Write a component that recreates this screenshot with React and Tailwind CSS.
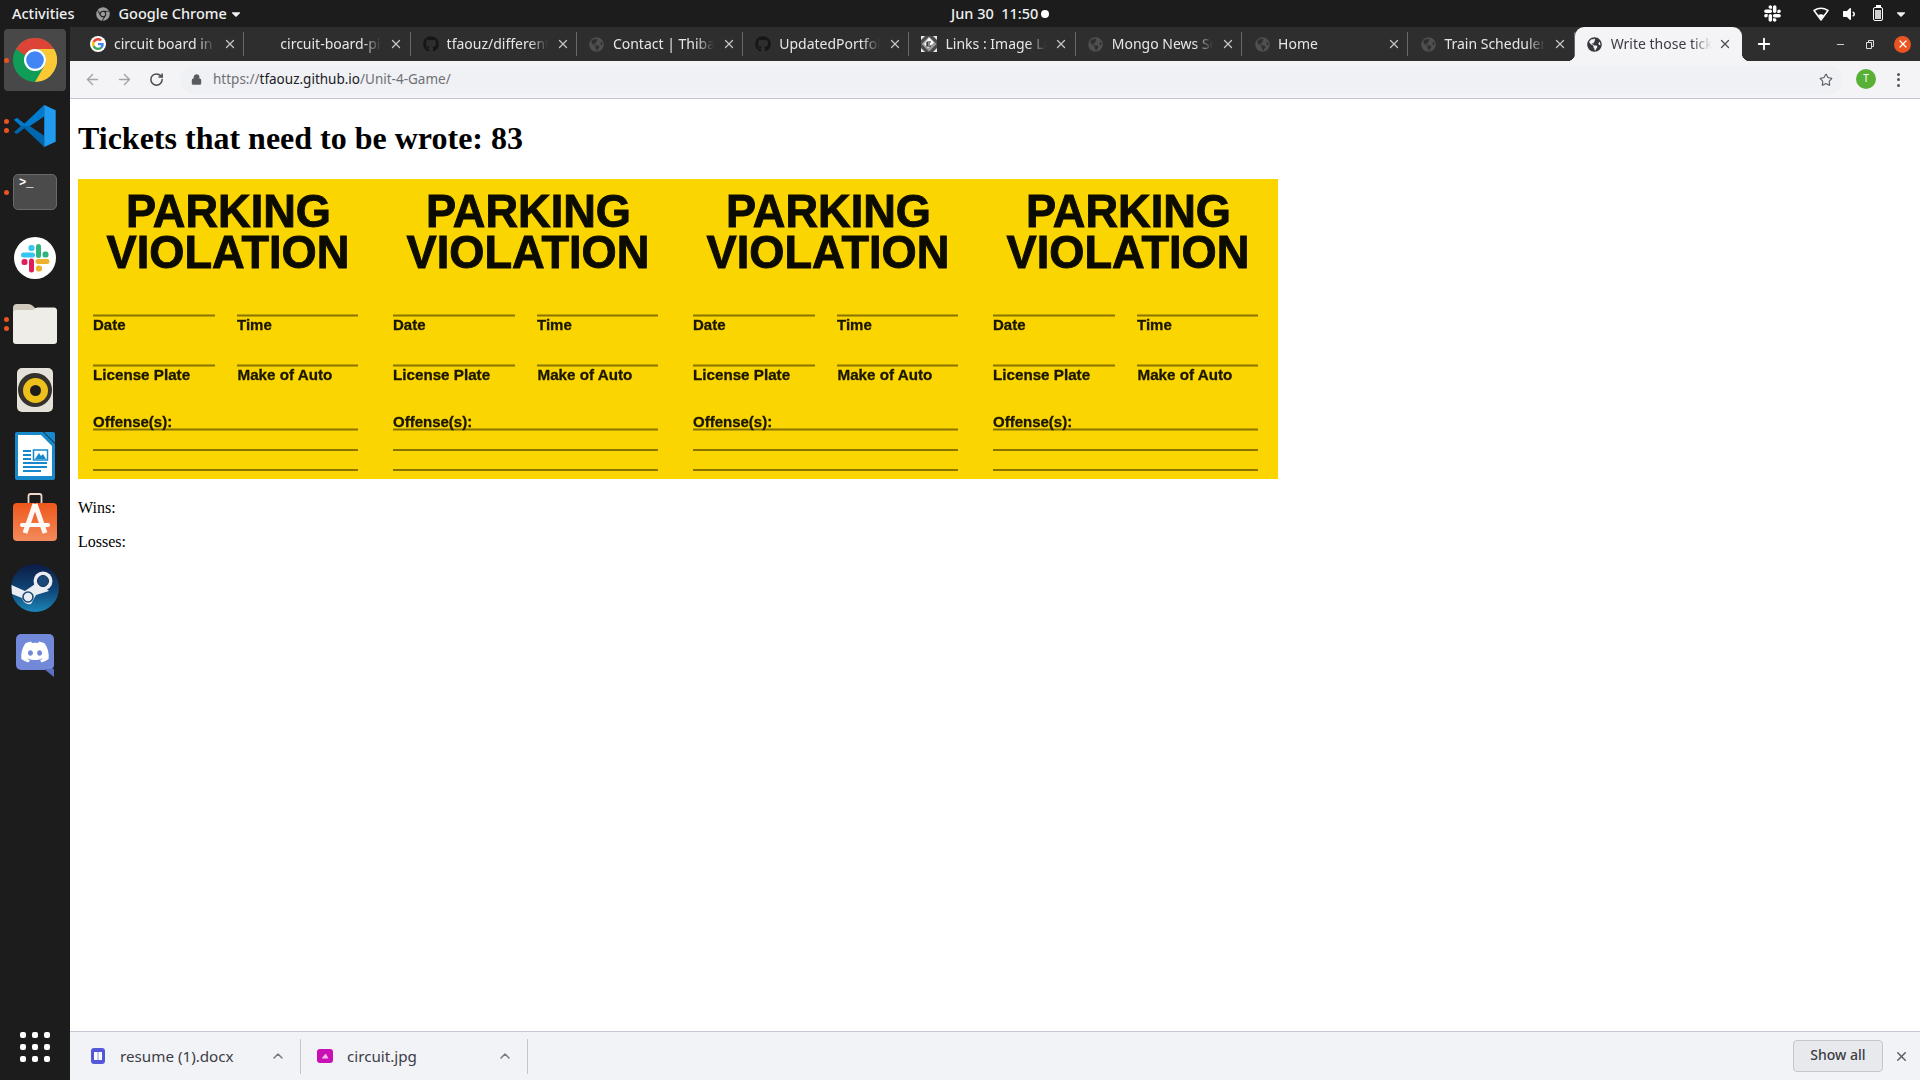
import React from "react";
import { ArrowLeft, ArrowRight, RotateCw, Lock, Star, Plus, Minus, X, ChevronUp } from "lucide-react";
import { FaGithub, FaGlobeAmericas, FaChrome, FaSlack, FaVolumeDown, FaDiscord, FaCaretDown } from "react-icons/fa";

const UI = "font-['Noto_Sans',sans-serif]";

function ChromeLogo({ size = 44 }) {
  return (
    <svg width={size} height={size} viewBox="0 0 48 48">
      <circle cx="24" cy="24" r="24" fill="#109d58" />
      <path d="M3.2 12 A24 24 0 0 1 44.8 12 H24 A12 12 0 0 0 13.2 19 Z" fill="#db4437" />
      <path d="M44.8 12 A24 24 0 0 1 24 48 L34.4 30 A12 12 0 0 0 24 12 Z" fill="#fcc934" />
      <circle cx="24" cy="24" r="12" fill="#ffffff" />
      <circle cx="24" cy="24" r="9.6" fill="#4285f4" />
    </svg>
  );
}

function GoogleG() {
  return (
    <span className="flex h-4 w-4 items-center justify-center rounded-full bg-white">
      <svg width="12" height="12" viewBox="0 0 48 48">
        <path fill="#ea4335" d="M24 9.5c3.5 0 6.7 1.3 9.2 3.5l6.9-6.9C35.900 2.300 30.400 0 24 0 14.600 0 6.500 5.400 2.600 13.200l8 6.200C12.500 13.600 17.800 9.500 24 9.500z" />
        <path fill="#4285f4" d="M47 24.500c0-1.600-.1-3.100-.4-4.500H24v9h13c-.6 3-2.300 5.500-4.800 7.200l7.700 6C44.400 38.600 47 32 47 24.500z" />
        <path fill="#fbbc05" d="M10.600 28.600A14.500 14.500 0 0 1 10.600 19.400l-8-6.200a24 24 0 0 0 0 21.600z" />
        <path fill="#34a853" d="M24 48c6.500 0 11.900-2.100 15.900-5.800l-7.700-6c-2.200 1.500-5 2.300-8.200 2.300-6.200 0-11.500-4.100-13.400-9.900l-8 6.200C6.500 42.600 14.600 48 24 48z" />
      </svg>
    </span>
  );
}

function LinksIcon() {
  return (
    <svg width="16" height="16" viewBox="0 0 16 16">
      <rect x="0" y="0" width="16" height="16" fill="#4a4a4a" />
      <path d="M0 0 L4 0 L0 4 Z M16 0 L12 0 L16 4 Z M0 16 L4 16 L0 12 Z M16 16 L12 16 L16 12 Z" fill="#e8e8e8" />
      <path d="M8 0.500 L15.500 8 L8 15.500 L0.500 8 Z" fill="#9c9c9c" />
      <path d="M8 1.500 L13 6.500 L7 12 L3 8 Z" fill="#ffffff" />
      <path d="M6 6 L10 6 M6 8 L9 8 M6 6 L6 10 L10 10" stroke="#111" strokeWidth="1.200" fill="none" />
    </svg>
  );
}

const tabs = [
  { title: "circuit board in", icon: <GoogleG /> },
  { title: "circuit-board-pi", icon: null },
  { title: "tfaouz/different", icon: <FaGithub size={16} className="text-[#161616]" /> },
  { title: "Contact | Thibaut", icon: <FaGlobeAmericas size={15} className="text-[#4f4f50]" /> },
  { title: "UpdatedPortfolio", icon: <FaGithub size={16} className="text-[#161616]" /> },
  { title: "Links : Image Links", icon: <LinksIcon /> },
  { title: "Mongo News Scraper", icon: <FaGlobeAmericas size={15} className="text-[#4f4f50]" /> },
  { title: "Home", icon: <FaGlobeAmericas size={15} className="text-[#4f4f50]" /> },
  { title: "Train Scheduler", icon: <FaGlobeAmericas size={15} className="text-[#4f4f50]" /> },
];

function Tab({ title, icon }) {
  return (
    <div className="flex h-[24px] w-[166.300px] shrink-0 items-center border-r border-[#6a696a] pl-3">
      <span className="flex w-4 shrink-0 justify-center">{icon}</span>
      <span className="ml-2 w-[101px] overflow-hidden whitespace-nowrap pb-[2px] text-[14px] text-[#e6e6e8] [mask-image:linear-gradient(to_right,black_82%,transparent)]">
        {title}
      </span>
      <X size={14} strokeWidth={2.2} className="ml-[8px] text-[#c4c4c6]" />
    </div>
  );
}

function Dock({ dots = 0, active = false, children }) {
  return (
    <div className="relative flex h-[66px] w-[70px] shrink-0 items-center justify-center">
      {active && <div className="absolute left-1 top-[2px] h-[62px] w-[62px] rounded-[4px] bg-[#484848]" />}
      <div className="relative flex items-center justify-center">{children}</div>
      {dots > 0 && (
        <div className="absolute left-[4px] top-0 flex h-full flex-col justify-center gap-[4px]">
          {Array.from({ length: dots }).map((_, i) => (
            <span key={i} className="h-[5px] w-[5px] rounded-full bg-[#e95420]" />
          ))}
        </div>
      )}
    </div>
  );
}

function Sidebar() {
  return (
    <aside className="flex w-[70px] shrink-0 flex-col bg-[#1c1c1c]">
      <Dock dots={1} active><ChromeLogo size={44} /></Dock>
      <Dock dots={2}>
        <svg width="44" height="44" viewBox="0 0 100 100">
          <path d="M71 2 L26 45 L9 32 L2 36 L18 50 L2 64 L9 68 L26 55 L71 98 L71 72 L38 50 L71 28 Z" fill="#0066ad" />
          <path d="M71 2 L26 45 L9 32 L2 36 L18 50 L38 50 L71 28 Z" fill="#007acc" />
          <path d="M71 2 L97 14 V86 L71 98 Z" fill="#1f9cf0" />
        </svg>
      </Dock>
      <Dock dots={1}>
        <div className="h-[36px] w-[44px] rounded-[5px] border border-[#6a6a6a] bg-[#4b4b4b] pl-[5px] font-['Liberation_Mono',monospace] text-[12px] font-bold leading-[17px] text-white">
          &gt;_
        </div>
      </Dock>
      <Dock>
        <svg width="42" height="42" viewBox="0 0 42 42">
          <circle cx="21" cy="21" r="21" fill="#ffffff" />
          <rect x="7" y="15.500" width="14" height="5" rx="2.500" fill="#36c5f0" />
          <rect x="14.500" y="8" width="6" height="6" rx="2.500" fill="#36c5f0" />
          <rect x="22" y="7" width="5" height="14" rx="2.500" fill="#2eb67d" />
          <rect x="28.500" y="14.500" width="6" height="6" rx="2.500" fill="#2eb67d" />
          <rect x="21.500" y="22" width="14" height="5" rx="2.500" fill="#ecb22e" />
          <rect x="22" y="28.500" width="6" height="6" rx="2.500" fill="#ecb22e" />
          <rect x="15" y="21.500" width="5" height="14" rx="2.500" fill="#e01e5a" />
          <rect x="7.500" y="22" width="6" height="6" rx="2.500" fill="#e01e5a" />
        </svg>
      </Dock>
      <Dock dots={2}>
        <svg width="46" height="42" viewBox="0 0 46 42">
          <path d="M1 5 Q1 1 5 1 H16 Q19 1 21 3 L23 5 H41 Q45 5 45 9 V14 H1 Z" fill="#cfcabc" />
          <path d="M1 10 Q1 7 4 7 H21 L25 4.500 H42 Q45 4.500 45 8 V38 Q45 41 42 41 H4 Q1 41 1 38 Z" fill="#efede8" />
        </svg>
      </Dock>
      <Dock>
        <div className="flex h-[44px] w-[36px] items-center justify-center rounded-[5px] bg-[#e4e1d8]">
          <div className="flex h-[34px] w-[34px] items-center justify-center rounded-full bg-[#35322e]">
            <div className="flex h-[25px] w-[25px] items-center justify-center rounded-full bg-[#eec01c]">
              <div className="h-[11px] w-[11px] rounded-full bg-[#1f1d1a]" />
            </div>
          </div>
        </div>
      </Dock>
      <Dock>
        <svg width="40" height="48" viewBox="0 0 40 48">
          <path d="M0 2 Q0 0 2 0 H28 L40 12 V46 Q40 48 38 48 H2 Q0 48 0 46 Z" fill="#1689cc" />
          <path d="M3 3 H26 L37 14 V44 H3 Z" fill="#ffffff" />
          <path d="M29 0 H38 Q40 0 40 2 V11 Z" fill="#1689cc" />
          <path d="M8 19 H16 M8 23 H16 M8 27 H16 M8 31 H32 M8 35 H32 M8 39 H26" stroke="#1689cc" strokeWidth="2" />
          <rect x="18.500" y="18" width="14" height="10" fill="#fff" stroke="#1689cc" strokeWidth="1.500" />
          <path d="M20 27 L24 21 L26 24 L28 22 L31 27 Z" fill="#1689cc" />
        </svg>
      </Dock>
      <Dock>
        <svg className="mb-[11px]" width="44" height="50" viewBox="0 0 44 50">
          <defs>
            <linearGradient id="storeGrad" x1="0" y1="0" x2="0" y2="1">
              <stop offset="0" stopColor="#ef571b" />
              <stop offset="1" stopColor="#f28b5c" />
            </linearGradient>
          </defs>
          <path d="M15.500 12 V4 Q15.500 2 17.500 2 H26.500 Q28.500 2 28.500 4 V12" fill="none" stroke="#f0d9cc" strokeWidth="1.800" />
          <rect x="0" y="11" width="44" height="38" rx="4" fill="url(#storeGrad)" />
          <path d="M22 12 L12 41 M22 12 L32 41" stroke="#fff" strokeWidth="5" opacity="0.95" />
          <path d="M9 33 H35" stroke="#fff" strokeWidth="4" strokeLinecap="round" />
        </svg>
      </Dock>
      <Dock>
        <svg width="48" height="48" viewBox="0 0 48 48">
          <defs>
            <linearGradient id="steamGrad" x1="0" y1="0" x2="0" y2="1">
              <stop offset="0" stopColor="#0c1b45" />
              <stop offset="0.55" stopColor="#0f4677" />
              <stop offset="1" stopColor="#1b86b8" />
            </linearGradient>
          </defs>
          <circle cx="24" cy="24" r="24" fill="url(#steamGrad)" />
          <path d="M0.500 21 L14 27 L27 18 L38 27 L25 31 L20 40 Q13 41 11 34 L1 30 Z" fill="#e9edf1" />
          <circle cx="32" cy="17" r="9.500" fill="#e9edf1" />
          <circle cx="32" cy="17" r="5.500" fill="#1b4a78" stroke="#0f2f55" strokeWidth="1" />
          <circle cx="17" cy="33" r="5" fill="none" stroke="#1b4a78" strokeWidth="1.600" />
        </svg>
      </Dock>
      <Dock>
        <div className="relative mb-[5px] flex h-[36px] w-[38px] items-center justify-center rounded-[5px] bg-[#7288d8]">
          <FaDiscord size={30} className="text-white" />
          <svg className="absolute right-0 top-[35px]" width="10" height="8" viewBox="0 0 10 8">
            <path d="M0 0 H10 V8 Z" fill="#5a6fbd" />
          </svg>
        </div>
      </Dock>
      <div className="mt-auto flex h-[66px] w-[70px] items-center justify-center">
        <div className="grid grid-cols-3 gap-x-[6px] gap-y-[6px]">
          {Array.from({ length: 9 }).map((_, i) => (
            <span key={i} className="h-[6px] w-[6px] rounded-[2px] bg-white" />
          ))}
        </div>
      </div>
    </aside>
  );
}

function TopBar() {
  return (
    <header className={`flex h-[27px] shrink-0 items-center bg-[#1c1c1c] text-[14.500px] font-medium text-[#f0f0f0] ${UI}`}>
      <div className="flex w-[951px] shrink-0 items-center pl-3">
        <span>Activities</span>
        <FaChrome size={14} className="ml-[22px] text-[#9a9a9a]" />
        <span className="ml-2">Google Chrome</span>
        <FaCaretDown size={14} className="ml-[2px]" />
      </div>
      <div className="flex items-center gap-[3px]">
        <span className="whitespace-pre">Jun 30  11:50</span>
        <span className="h-[8px] w-[8px] rounded-full bg-white" />
      </div>
      <div className="flex flex-1 items-center justify-end pr-3">
        <FaSlack size={19} className="text-white" />
        <svg className="ml-[31px]" width="16" height="14" viewBox="0 0 16 14">
          <path d="M1 3.500 Q8 -1 15 3.500 L8 13 Z" fill="none" stroke="#fff" strokeWidth="1.500" strokeLinejoin="round" />
          <path d="M5 8 Q8 6.500 11 8 L8 12 Z" fill="#fff" />
        </svg>
        <FaVolumeDown size={16} className="ml-[12px] text-white" />
        <div className="relative ml-[16px] flex h-[14px] w-[10px] flex-col justify-end rounded-[2px] border border-white p-[1px]">
          <span className="absolute -top-[3px] left-[1.500px] h-[2px] w-[5px] bg-white" />
          <span className="h-[9px] w-full bg-[#cfcfcf]" />
        </div>
        <FaCaretDown size={14} className="ml-[11px]" />
      </div>
    </header>
  );
}

function TabStrip() {
  return (
    <div className={`flex h-[34px] shrink-0 items-center bg-[#2f2e2f] pl-2 ${UI}`}>
      {tabs.map((t) => (
        <Tab key={t.title} {...t} />
      ))}
      <div className="relative flex h-[34px] w-[167px] shrink-0 items-center rounded-t-[9px] bg-[#f4f4f7] pl-[12px] text-[#3c3c46]">
        <span className="absolute -left-[8px] bottom-0 h-[8px] w-[8px] bg-[radial-gradient(circle_at_0_0,transparent_8px,#f4f4f7_8.500px)]" />
        <span className="absolute -right-[8px] bottom-0 h-[8px] w-[8px] bg-[radial-gradient(circle_at_100%_0,transparent_8px,#f4f4f7_8.500px)]" />
        <FaGlobeAmericas size={15} className="shrink-0 text-[#36363c]" />
        <span className="ml-[9px] w-[101px] overflow-hidden whitespace-nowrap pb-[2px] text-[14px] [mask-image:linear-gradient(to_right,black_80%,transparent)]">
          Write those tickets
        </span>
        <X size={14} strokeWidth={2.2} className="ml-[6px] text-[#4a4a50]" />
      </div>
      <Plus size={18} strokeWidth={2.5} className="ml-[13px] text-white" />
      <div className="ml-auto flex items-center pr-[9px]">
        <Minus size={11} strokeWidth={2} className="text-[#dcdcdc]" />
        <svg className="ml-[20px]" width="8" height="9" viewBox="0 0 8 9">
          <path d="M0.500 2.500 H5.500 V8.500 H0.500 Z M2.500 2.500 V0.500 H7.500 V6.500 H5.500" fill="none" stroke="#dcdcdc" strokeWidth="1" />
        </svg>
        <span className="ml-[20px] flex h-[17px] w-[17px] items-center justify-center rounded-full bg-[#e95420]">
          <X size={12} strokeWidth={2.5} className="text-white" />
        </span>
      </div>
    </div>
  );
}

function Toolbar() {
  return (
    <div className={`flex h-[38px] shrink-0 items-center border-b border-[#c2c6d0] bg-[#f4f4f7] pl-[14px] ${UI}`}>
      <ArrowLeft size={17} strokeWidth={2} className="shrink-0 text-[#a3a5ab]" />
      <ArrowRight size={17} strokeWidth={2} className="ml-[15px] shrink-0 text-[#a3a5ab]" />
      <RotateCw size={15} strokeWidth={2.4} className="ml-[16px] shrink-0 text-[#4a4b50]" />
      <div className="ml-[16px] flex h-[28px] w-[1663px] shrink-0 items-center rounded-full bg-[#f0f1f4] pl-[11px]">
        <Lock size={11} strokeWidth={2.6} className="text-[#5a5b60]" fill="#5a5b60" />
        <span className="ml-[11px] whitespace-nowrap text-[13.500px] text-[#6e7076]">
          https://<span className="text-[#202124]">tfaouz.github.io</span>/Unit-4-Game/
        </span>
        <Star size={14} strokeWidth={1.8} className="ml-auto mr-[10px] text-[#55565c]" />
      </div>
      <span className="mb-[2px] ml-[13px] flex h-[20px] w-[20px] shrink-0 items-center justify-center rounded-full bg-[#59b036] text-[10px] text-white">
        T
      </span>
      <div className="ml-[21px] flex shrink-0 flex-col gap-[2.500px]">
        <span className="h-[3px] w-[3px] rounded-full bg-[#55565c]" />
        <span className="h-[3px] w-[3px] rounded-full bg-[#55565c]" />
        <span className="h-[3px] w-[3px] rounded-full bg-[#55565c]" />
      </div>
    </div>
  );
}

function Tile({ x }) {
  const line = "#8a7400";
  const bold = { fontFamily: "'Liberation Sans', sans-serif", fontWeight: 700, fill: "#1a1600", stroke: "#1a1600", strokeWidth: 0.3 };
  const big = { ...bold, fill: "#0c0b00", stroke: "#0c0b00", strokeWidth: 0.9 };
  return (
    <g transform={`translate(${x} 0)`}>
      <text x="150.500" y="48" textAnchor="middle" textLength="205" lengthAdjust="spacingAndGlyphs" fontSize="46" style={big}>PARKING</text>
      <text x="150" y="89" textAnchor="middle" textLength="243" lengthAdjust="spacingAndGlyphs" fontSize="46" style={big}>VIOLATION</text>
      <path d="M15 136.500 H137 M159 136.500 H280 M15 186.500 H137 M159 186.500 H280 M15 250.500 H280 M15 271 H280 M15 291 H280" stroke={line} strokeWidth="2" />
      <text x="15" y="151" fontSize="15" style={bold}>Date</text>
      <text x="159" y="151" fontSize="15" style={bold}>Time</text>
      <text x="15" y="201" fontSize="15.200" style={bold}>License Plate</text>
      <text x="159.500" y="201" fontSize="15.200" style={bold}>Make of Auto</text>
      <text x="15" y="248" fontSize="15" style={bold}>Offense(s):</text>
    </g>
  );
}

function Page() {
  return (
    <main className="min-h-0 flex-1 overflow-hidden bg-white pl-2 font-['Liberation_Serif',serif] text-black">
      <h1 className="my-[21.440px] text-[32px] font-bold leading-[37px]">Tickets that need to be wrote: 83</h1>
      <div className="pb-1">
        <svg className="block blur-[0.3px]" width="1200" height="300" viewBox="0 0 1200 300">
          <rect width="1200" height="300" fill="#fad500" />
          <Tile x={0} />
          <Tile x={300} />
          <Tile x={600} />
          <Tile x={900} />
        </svg>
      </div>
      <p className="my-4 text-[16px] leading-[18px]">Wins:</p>
      <p className="my-4 text-[16px] leading-[18px]">Losses:</p>
    </main>
  );
}

function DownloadItem({ icon, name }) {
  return (
    <div className="flex h-[35px] w-[227px] items-center border-r border-[#c2c6d0] pl-[16px] pr-[14px]">
      <span className="flex w-[16px] justify-center">{icon}</span>
      <span className="ml-[14px] text-[15.200px] text-[#3c3c46]">{name}</span>
      <ChevronUp size={16} strokeWidth={2.2} className="ml-auto text-[#77787e]" />
    </div>
  );
}

function DownloadBar() {
  return (
    <footer className={`flex h-[49px] shrink-0 items-center border-t border-[#c6c7d2] bg-[#f2f3f6] ${UI}`}>
      <div className="w-[4px]" />
      <DownloadItem
        name="resume (1).docx"
        icon={
          <span className="flex h-[16px] w-[14px] items-center justify-center rounded-[3px] bg-[#5558d9]">
            <span className="h-[8px] w-[8px] border-x-[3px] border-white bg-[#c9caf5]" />
          </span>
        }
      />
      <DownloadItem
        name="circuit.jpg"
        icon={
          <span className="flex h-[14px] w-[16px] items-center justify-center rounded-[3px] bg-[#c810b4]">
            <span className="h-[5px] w-[7px] bg-[#f6b6ee] [clip-path:polygon(0_100%,60%_0,100%_100%)]" />
          </span>
        }
      />
      <button className="mb-[1px] ml-auto flex h-[32px] w-[90px] items-center justify-center rounded-[4px] border border-[#c4c7d0] bg-[#e8e9ec] pb-[2px] text-[14px] font-medium text-[#3c3c46]">
        Show all
      </button>
      <X size={15} strokeWidth={2.4} className="ml-[11px] mr-[11px] text-[#5f6065]" />
    </footer>
  );
}

export default function App() {
  return (
    <div className="flex h-screen w-[1920px] flex-col overflow-hidden bg-white">
      <TopBar />
      <div className="flex min-h-0 flex-1">
        <Sidebar />
        <div className="flex min-w-0 flex-1 flex-col">
          <TabStrip />
          <Toolbar />
          <Page />
          <DownloadBar />
        </div>
      </div>
    </div>
  );
}
